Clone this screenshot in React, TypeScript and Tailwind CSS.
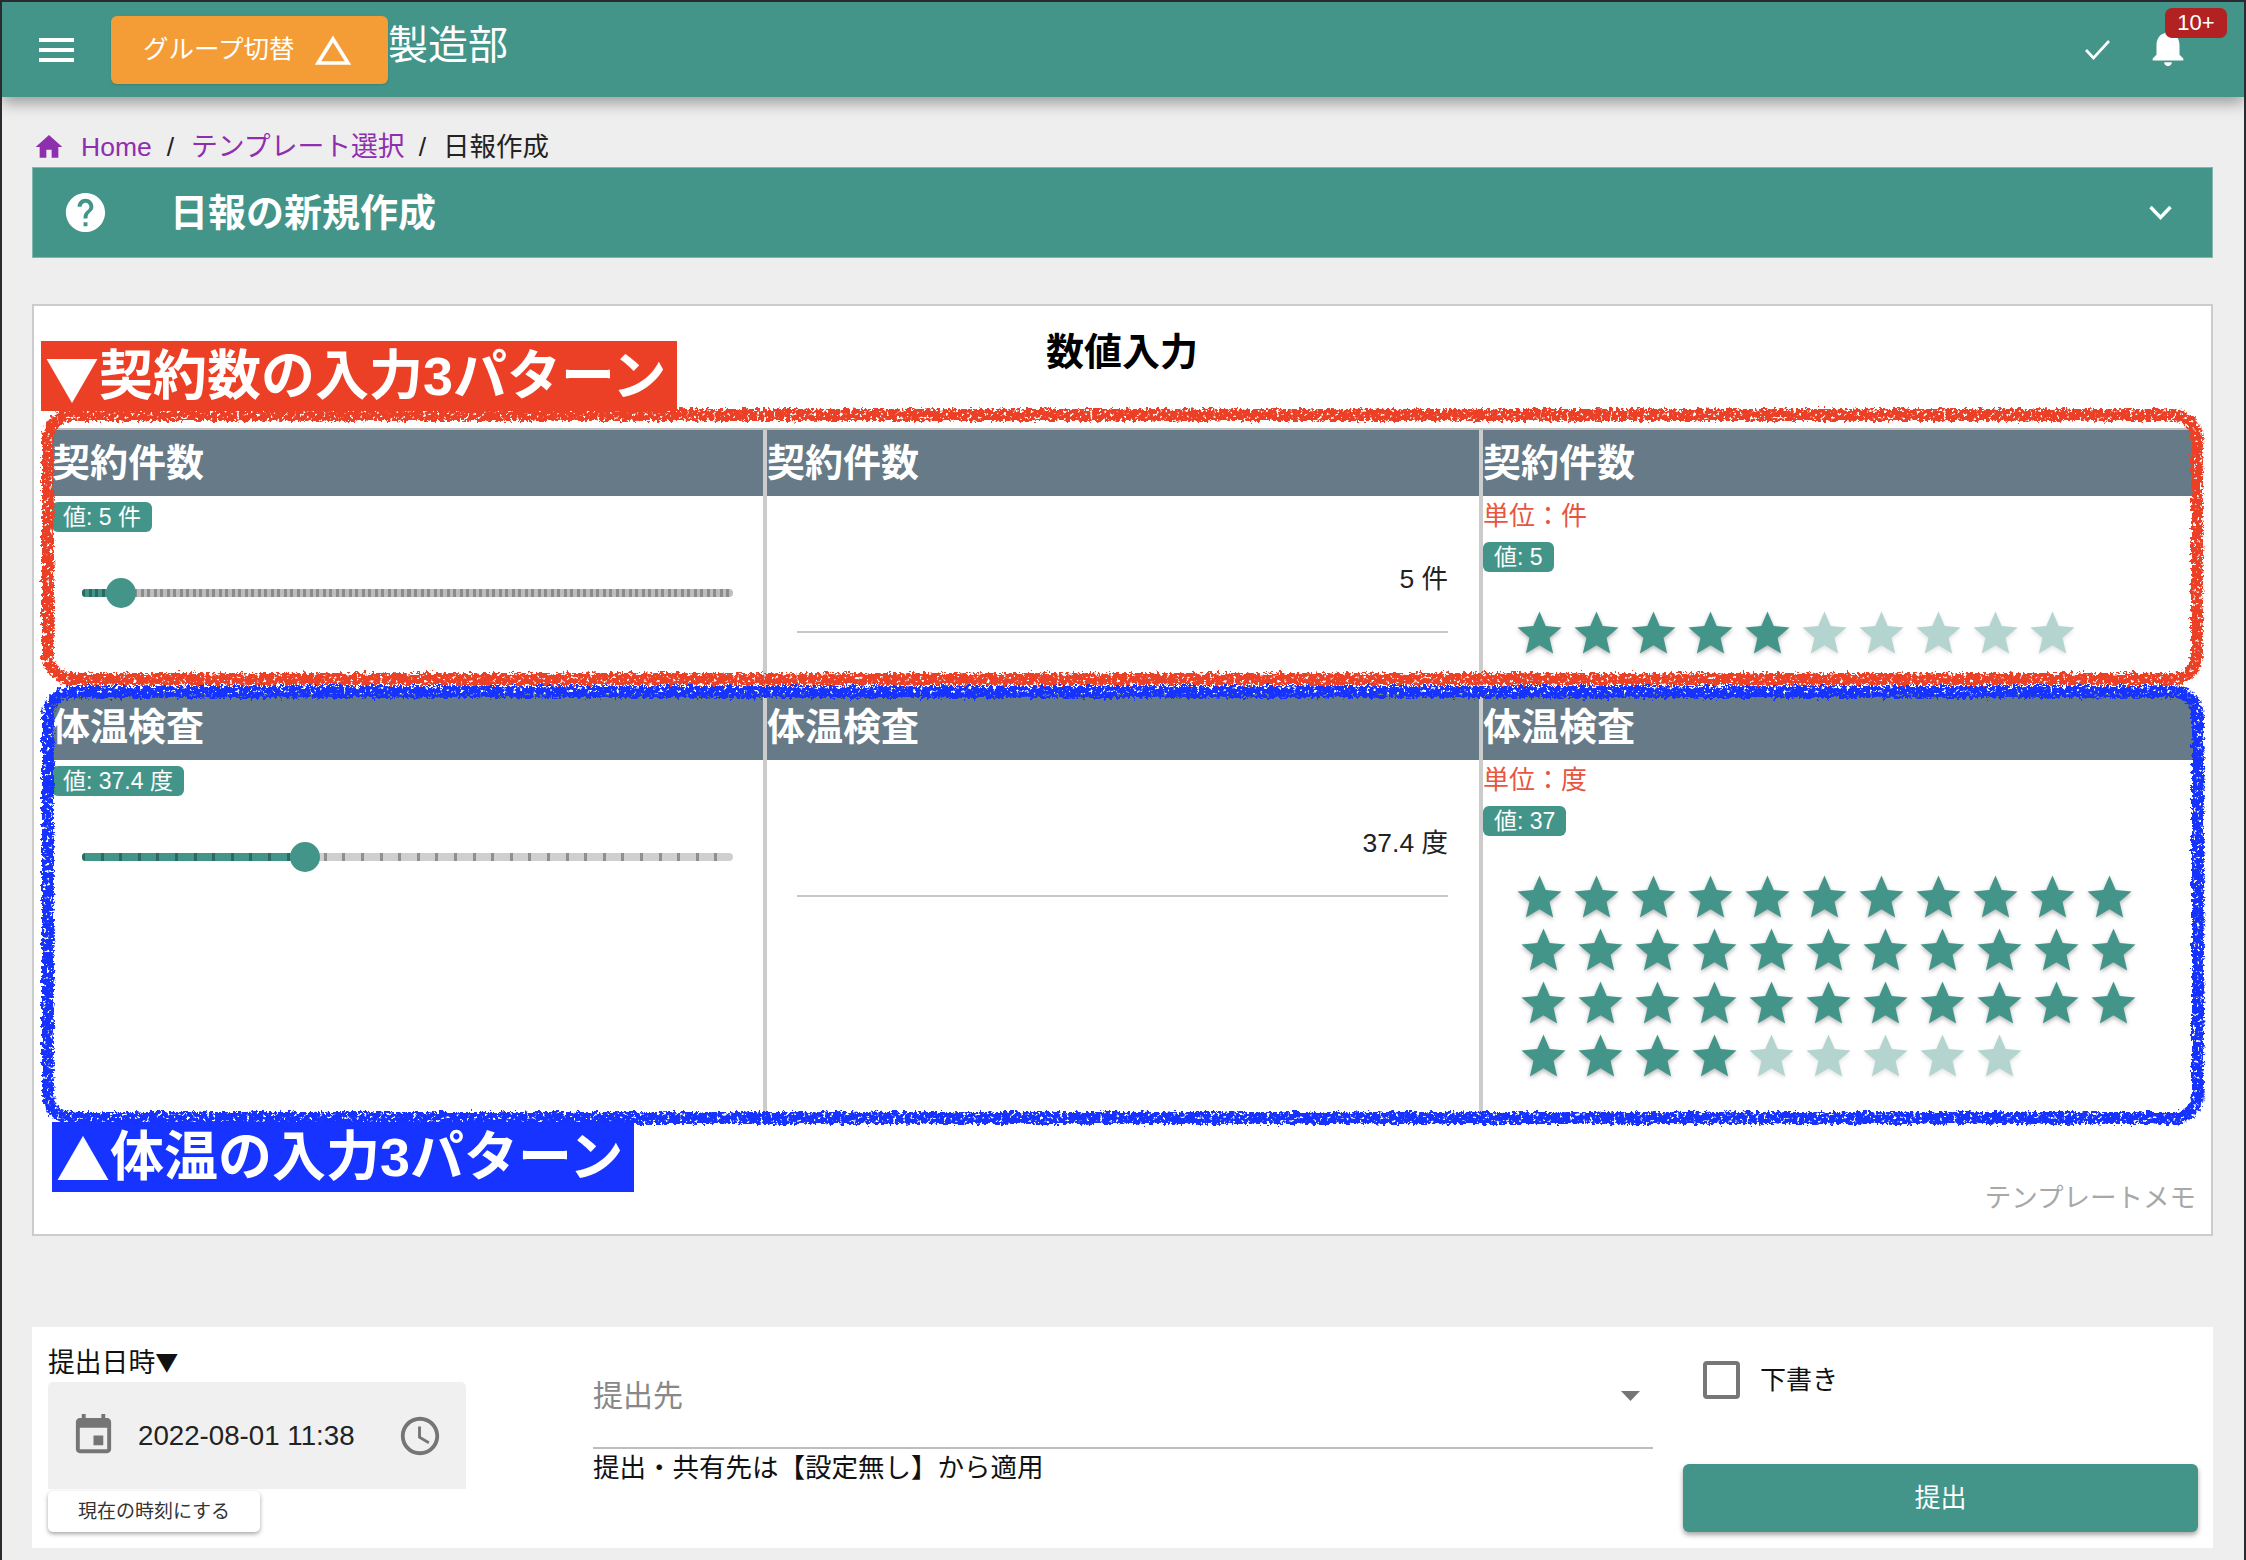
import React from 'react';

const STAR = 'M12 17.27 18.18 21l-1.64-7.03L22 9.24l-7.19-.61L12 2 9.19 8.63 2 9.24l5.46 4.73L5.82 21z';

const Star: React.FC<{ on: boolean }> = ({ on }) => (
  <svg
    viewBox="0 0 24 24"
    className={`w-[53px] h-[53px] shrink-0 fill-[#43958a] drop-shadow-[0_2px_2px_rgba(0,0,0,0.3)] ${on ? '' : 'opacity-40'}`}
  >
    <path d={STAR} />
  </svg>
);

const Badge: React.FC<{ text: string }> = ({ text }) => (
  <div className="inline-flex items-center h-[30px] px-[11px] rounded-[6px] bg-[#43958a] text-white text-[23px] leading-none">
    {text}
  </div>
);

const Slider: React.FC<{ pct: number; pitch: number; rail: string; mark: string }> = ({ pct, pitch, rail, mark }) => {
  const marks = (color: string) =>
    `repeating-linear-gradient(90deg, ${color} 0 3px, transparent 3px ${pitch}px)`;
  return (
    <div className="relative w-[651px] h-[8px]">
      <div className="h-full rounded-full overflow-hidden" style={{ backgroundColor: rail, backgroundImage: marks(mark) }}>
        <div className="h-full bg-[#43958a]" style={{ width: `${pct}%`, backgroundImage: marks('#2c6a60') }} />
      </div>
      <div
        className="absolute top-1/2 -translate-x-1/2 -translate-y-1/2 w-[30px] h-[30px] rounded-full bg-[#43958a]"
        style={{ left: `${pct}%` }}
      />
    </div>
  );
};

const HeadCell: React.FC<{ text: string; border?: boolean }> = ({ text, border }) => (
  <div className={`h-[66px] flex items-center bg-[#667a87] text-white text-[38px] font-bold ${border ? 'border-l-4 border-[#cccccc]' : ''}`}>
    {text}
  </div>
);

type RowProps = {
  title: string;
  height: string;
  sliderLabel: string;
  pct: number;
  pitch: number;
  rail: string;
  mark: string;
  inputValue: string;
  unit: string;
  starLabel: string;
  starRows: { offset: 'a' | 'b'; on: number; total: number }[];
};

const Row: React.FC<RowProps> = ({ title, height, sliderLabel, pct, pitch, rail, mark, inputValue, unit, starLabel, starRows }) => (
  <div className="grid grid-cols-[711px_716px_715px]">
    <HeadCell text={title} />
    <HeadCell text={title} border />
    <HeadCell text={title} border />

    <div className={`${height} pt-[6px]`}>
      <Badge text={sliderLabel} />
      <div className="ml-[30px] mt-[57px]">
        <Slider pct={pct} pitch={pitch} rail={rail} mark={mark} />
      </div>
    </div>

    <div className="border-l-4 border-[#cccccc] pl-[30px] pr-[31px] pt-[67px]">
      <div className="h-[34px] flex items-center justify-end text-[26.5px] text-[#222]">{inputValue}</div>
      <div className="mt-[34px] h-[2px] bg-[#c8c8c8]" />
    </div>

    <div className="border-l-4 border-[#cccccc]">
      <div className="h-[38px] pt-[3px] flex items-center text-[26px] text-[#e8553f]">単位：{unit}</div>
      <div className="mt-[8px] h-[30px]">
        <Badge text={starLabel} />
      </div>
      <div className="mt-[35px]">
        {starRows.map((r, i) => (
          <div key={i} className={`flex gap-[4px] ${r.offset === 'a' ? 'ml-[30px]' : 'ml-[34px]'}`}>
            {Array.from({ length: r.total }).map((_, n) => (
              <Star key={n} on={n < r.on} />
            ))}
          </div>
        ))}
      </div>
    </div>
  </div>
);

export default function App() {
  return (
    <div className="relative w-[2246px] h-[1560px] overflow-hidden bg-[#eeeeee] border-t-2 border-x-2 border-[#2a2b30] font-['Liberation_Sans','Noto_Sans_CJK_JP',sans-serif]">
      {/* App bar */}
      <header className="relative z-10 h-[95px] flex items-center bg-[#43958a] text-white shadow-[0_6px_14px_rgba(0,0,0,0.35)]">
        <svg width="35" height="24" viewBox="0 0 35 24" className="ml-[37px] fill-white">
          <rect width="35" height="4" />
          <rect y="10" width="35" height="4" />
          <rect y="20" width="35" height="4" />
        </svg>
        <div className="ml-[37px] w-[277px] h-[68px] flex items-center pl-[32px] rounded-[6px] bg-[#f49d37] shadow-sm text-[25.5px]">
          グループ切替
          <svg width="38" height="32" viewBox="0 0 38 32" className="ml-[20px]">
            <path d="M19 5 34 29H4z" fill="none" stroke="white" strokeWidth="3.6" />
          </svg>
        </div>
        <div className="-mt-[9px] text-[40px]">製造部</div>
        <div className="ml-auto flex items-center">
          <svg width="25" height="20" viewBox="0 0 25 20">
            <path d="M1 10l7.5 8L24 1" fill="none" stroke="white" strokeWidth="2.6" />
          </svg>
          <div className="relative ml-[35px] mr-[53px]">
            <svg viewBox="0 0 24 24" className="w-[46px] h-[46px] fill-white -mt-[5px]">
              <path d="M12 22c1.1 0 2-.9 2-2h-4c0 1.1.89 2 2 2zm6-6v-5c0-3.07-1.64-5.64-4.5-6.32V4c0-.83-.67-1.5-1.5-1.5s-1.5.67-1.5 1.5v.68C7.63 5.36 6 7.92 6 11v5l-2 2v1h16v-1l-2-2z" />
            </svg>
            <span className="absolute left-[20px] top-[-21px] w-[62px] h-[30px] flex items-center justify-center rounded-[7px] bg-[#b22222] text-[22px] leading-none">
              10+
            </span>
          </div>
        </div>
      </header>

      <main className="w-[2181px] ml-[30px] pt-[30px]">
        {/* Breadcrumb */}
        <nav className="h-[40px] pt-[1px] flex items-center text-[26.5px] text-[#222]">
          <svg viewBox="0 0 24 24" className="w-[32px] h-[32px] ml-[1px] -mt-[1px] fill-[#8e2fae]">
            <path d="M10 20v-6h4v6h5v-8h3L12 3 2 12h3v8z" />
          </svg>
          <span className="ml-[16px] text-[#8e2fae]">Home</span>
          <span className="ml-[15px] mr-[17px]">/</span>
          <span className="text-[26.8px] text-[#8e2fae]">テンプレート選択</span>
          <span className="ml-[14px] mr-[17px]">/</span>
          <span>日報作成</span>
        </nav>

        {/* Collapsible title bar */}
        <div className="h-[91px] flex items-center bg-[#43958a] border border-[#7fb6ae] text-white">
          <svg viewBox="0 0 24 24" className="w-[47px] h-[47px] ml-[29px] fill-white">
            <path d="M12 2C6.48 2 2 6.48 2 12s4.48 10 10 10 10-4.48 10-10S17.52 2 12 2zm1 17h-2v-2h2v2zm2.07-7.75l-.9.92C13.45 12.9 13 13.5 13 15h-2v-.5c0-1.1.45-2.1 1.17-2.83l1.24-1.26c.37-.36.59-.86.59-1.41 0-1.1-.9-2-2-2s-2 .9-2 2H8c0-2.21 1.79-4 4-4s4 1.79 4 4c0 .88-.36 1.68-.93 2.25z" />
          </svg>
          <span className="ml-[61px] mt-[1px] text-[38px] font-bold">日報の新規作成</span>
          <svg width="23" height="15" viewBox="0 0 23 15" className="ml-auto mr-[40px]">
            <path d="M1.5 2 11.5 12.5 21.5 2" fill="none" stroke="white" strokeWidth="3.4" />
          </svg>
        </div>

        {/* Form card */}
        <section className="mt-[46px] h-[932px] bg-white border-2 border-[#cccccc] pl-[18px] pt-[23px]">
          <h1 className="w-[2140px] h-[46px] flex items-center justify-center text-[38px] font-bold text-black">数値入力</h1>
          <div className="mt-[53px] w-[2142px] border-t-2 border-[#bdbdbd]">
            <Row
              title="契約件数"
              height="h-[198px]"
              sliderLabel="値: 5 件"
              pct={6}
              pitch={6.51}
              rail="#bdbdbd"
              mark="#8b8b8b"
              inputValue="5 件"
              unit="件"
              starLabel="値: 5"
              starRows={[{ offset: 'a', on: 5, total: 10 }]}
            />
            <Row
              title="体温検査"
              height="h-[356px]"
              sliderLabel="値: 37.4 度"
              pct={34.25}
              pitch={18.6}
              rail="#cfcfcf"
              mark="#8f8f8f"
              inputValue="37.4 度"
              unit="度"
              starLabel="値: 37"
              starRows={[
                { offset: 'a', on: 11, total: 11 },
                { offset: 'b', on: 11, total: 11 },
                { offset: 'b', on: 11, total: 11 },
                { offset: 'b', on: 4, total: 9 },
              ]}
            />
          </div>
          <div className="mt-[65px] pr-[15px] h-[36px] flex items-center justify-end text-[26.5px] text-[#a8a8a8]">テンプレートメモ</div>
        </section>

        {/* Submit panel */}
        <section className="mt-[91px] h-[221px] flex bg-white">
          <div className="ml-[16px] w-[418px]">
            <div className="mt-[20px] h-[32px] flex items-center text-[26.8px] text-[#111]">
              提出日時<span className="-mt-[3px] text-[23px] font-['Noto_Sans_CJK_JP']">▼</span>
            </div>
            <div className="mt-[3px] h-[107px] flex items-center rounded-t-[5px] bg-[#f0f0f0]">
              <svg viewBox="0 0 24 24" className="w-[47px] h-[47px] ml-[22px] fill-[#757575]">
                <path d="M17 12h-5v5h5v-5zM16 1v2H8V1H6v2H5c-1.11 0-1.99.9-1.99 2L3 19c0 1.1.89 2 2 2h14c1.1 0 2-.9 2-2V5c0-1.1-.9-2-2-2h-1V1h-2zm3 18H5V8h14v11z" />
              </svg>
              <span className="ml-[21px] mt-[1px] text-[27.7px] text-[#222]">2022-08-01 11:38</span>
              <svg viewBox="0 0 24 24" className="w-[46px] h-[46px] ml-auto mr-[23px] fill-[#757575]">
                <path d="M11.99 2C6.47 2 2 6.48 2 12s4.47 10 9.99 10C17.52 22 22 17.52 22 12S17.52 2 11.99 2zM12 20c-4.42 0-8-3.58-8-8s3.58-8 8-8 8 3.58 8 8-3.58 8-8 8zm.5-13H11v6l5.25 3.15.75-1.23-4.5-2.67z" />
              </svg>
            </div>
            <button className="mt-[2px] w-[212px] h-[41px] pt-[1px] flex items-center justify-center rounded-[5px] bg-white text-[19px] text-[#333] shadow-[0_2px_4px_rgba(0,0,0,0.35)]">
              現在の時刻にする
            </button>
          </div>

          <div className="ml-[127px] w-[1060px]">
            <div className="h-[122px] flex items-start justify-between border-b-2 border-[#bdbdbd] pr-[13px] pt-[49px]">
              <span className="h-[38px] flex items-center text-[30px] text-[#888888]">提出先</span>
              <svg width="19" height="10" viewBox="0 0 19 10" className="mt-[15px] fill-[#757575]">
                <path d="M0 0h19L9.5 10z" />
              </svg>
            </div>
            <div className="mt-[3px] h-[34px] flex items-center text-[26.5px] text-[#111]">提出・共有先は【設定無し】から適用</div>
          </div>

          <div className="ml-[30px] w-[515px]">
            <div className="mt-[34px] ml-[20px] h-[38px] flex items-center">
              <div className="w-[37px] h-[38px] rounded-[4px] border-[4px] border-[#777777]" />
              <span className="ml-[20px] text-[26px] text-[#111]">下書き</span>
            </div>
            <button className="mt-[65px] w-[515px] h-[68px] pt-[1px] flex items-center justify-center rounded-[6px] bg-[#43958a] text-[26px] text-white shadow-[0_3px_5px_rgba(0,0,0,0.35)]">
              提出
            </button>
          </div>
        </section>
      </main>

      {/* Hand-drawn annotations over the screenshot */}
      <svg width="2246" height="1560" className="absolute left-[-2px] top-[-2px] pointer-events-none z-20">
        <defs>
          <filter id="crayon" x="-2%" y="-5%" width="104%" height="110%">
            <feTurbulence type="fractalNoise" baseFrequency="0.3" numOctaves="3" seed="4" result="noise" />
            <feDisplacementMap in="SourceGraphic" in2="noise" scale="9" xChannelSelector="R" yChannelSelector="G" result="rough" />
            <feColorMatrix in="noise" type="matrix" values="0 0 0 0 0  0 0 0 0 0  0 0 0 0 0  8 0 0 0 -2.1" result="mask" />
            <feComposite in="rough" in2="mask" operator="in" />
          </filter>
        </defs>
        <rect x="48" y="415" width="2149" height="264" rx="24" fill="none" stroke="#ec4026" strokeWidth="12" filter="url(#crayon)" />
        <rect x="48" y="692" width="2150" height="426" rx="24" fill="none" stroke="#1633ff" strokeWidth="12" filter="url(#crayon)" />
      </svg>
      <div className="absolute z-30 left-[39px] top-[339px] w-[636px] h-[70px] flex items-center pl-[4px] bg-[#ec4026] text-white text-[54px] font-bold whitespace-nowrap">
        <span className="font-['Noto_Sans_CJK_JP']">▼</span>契約数の入力3パターン
      </div>
      <div className="absolute z-30 left-[50px] top-[1120px] w-[582px] h-[70px] flex items-center pl-[4px] bg-[#1633ff] text-white text-[54px] font-bold whitespace-nowrap">
        <span className="font-['Noto_Sans_CJK_JP']">▲</span>体温の入力3パターン
      </div>
    </div>
  );
}
